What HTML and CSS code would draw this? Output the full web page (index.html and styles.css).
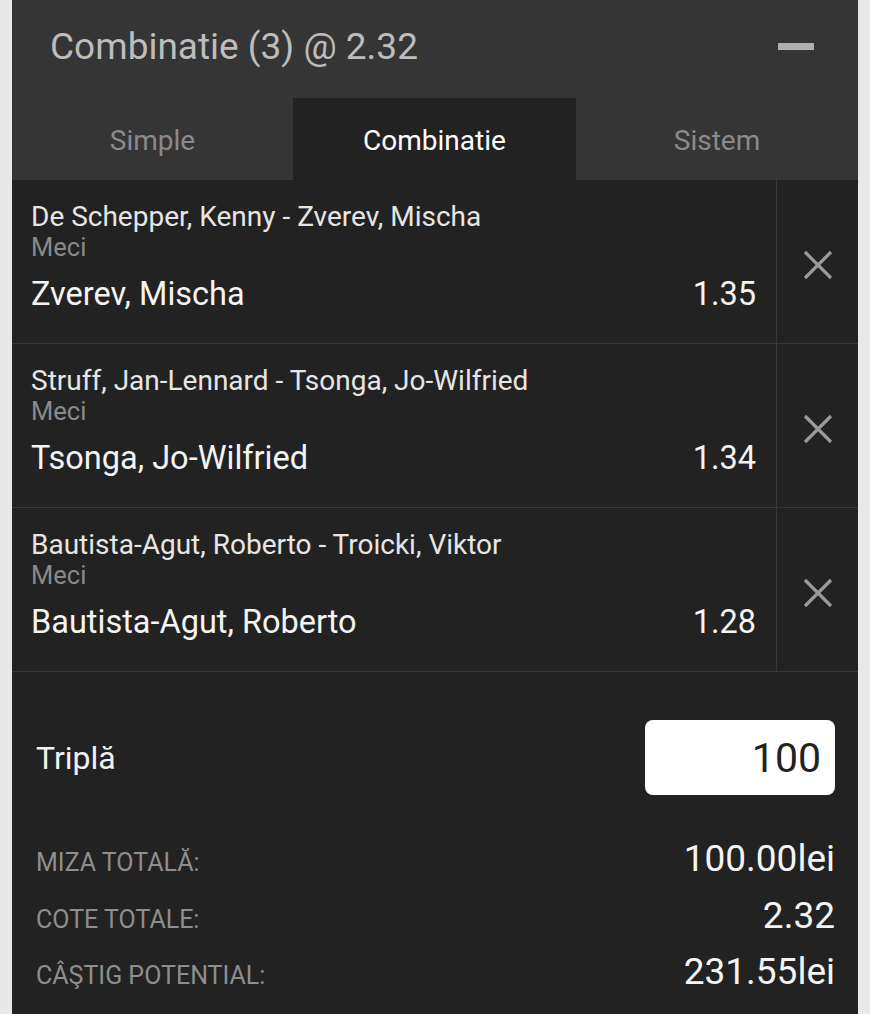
FILE: index.html
```html
<!DOCTYPE html>
<html>
<head>
<meta charset="utf-8">
<link rel="stylesheet" href="styles.css">
</head>
<body>
<div class="panel">
  <div class="head">
    <div class="title">Combinatie (3) @ 2.32</div>
    <div class="minus"></div>
  </div>
  <div class="tabs">
    <div class="tab">Simple</div>
    <div class="tab active">Combinatie</div>
    <div class="tab">Sistem</div>
  </div>
  <div class="bets">
    <div class="bet">
      <div class="info">
        <div class="match">De Schepper, Kenny - Zverev, Mischa</div>
        <div class="market">Meci</div>
        <div class="pick"><span>Zverev, Mischa</span><span>1.35</span></div>
      </div>
      <div class="remove"><svg width="32" height="32" viewBox="0 0 32 32"><path d="M3 3L29 29M29 3L3 29" stroke="#9a9a9a" stroke-width="3.2" fill="none"/></svg></div>
    </div>
    <div class="bet">
      <div class="info">
        <div class="match">Struff, Jan-Lennard - Tsonga, Jo-Wilfried</div>
        <div class="market">Meci</div>
        <div class="pick"><span>Tsonga, Jo-Wilfried</span><span>1.34</span></div>
      </div>
      <div class="remove"><svg width="32" height="32" viewBox="0 0 32 32"><path d="M3 3L29 29M29 3L3 29" stroke="#9a9a9a" stroke-width="3.2" fill="none"/></svg></div>
    </div>
    <div class="bet">
      <div class="info">
        <div class="match">Bautista-Agut, Roberto - Troicki, Viktor</div>
        <div class="market">Meci</div>
        <div class="pick"><span>Bautista-Agut, Roberto</span><span>1.28</span></div>
      </div>
      <div class="remove"><svg width="32" height="32" viewBox="0 0 32 32"><path d="M3 3L29 29M29 3L3 29" stroke="#9a9a9a" stroke-width="3.2" fill="none"/></svg></div>
    </div>
  </div>
  <div class="stake">
    <div class="stake-label">Triplă</div>
    <div class="stake-input">100</div>
  </div>
  <div class="totals">
    <div class="trow"><span class="tl">MIZA TOTALĂ:</span><span class="tv">100.00lei</span></div>
    <div class="trow"><span class="tl">COTE TOTALE:</span><span class="tv">2.32</span></div>
    <div class="trow"><span class="tl">CÂŞTIG POTENTIAL:</span><span class="tv">231.55lei</span></div>
  </div>
</div>
</body>
</html>
```
FILE: styles.css
```css
html, body {
  margin: 0;
  padding: 0;
  background: #e8e8e8;
  height: 100%;
}
body {
  font-family: Roboto, "Liberation Sans", sans-serif;
}
.panel {
  margin: 0 12px;
  background: #222222;
  min-height: 1014px;
}
.head {
  height: 98px;
  background: #353535;
  display: flex;
  align-items: center;
  justify-content: space-between;
  padding: 0 44px 6px 38px;
  box-sizing: border-box;
}
.title {
  color: #bdbdbd;
  font-size: 37px;
}
.minus {
  width: 36px;
  height: 7px;
  background: #b0b0b0;
}
.tabs {
  display: grid;
  grid-template-columns: 281px 283px 1fr;
  height: 82px;
  background: #353535;
}
.tab {
  display: flex;
  align-items: center;
  justify-content: center;
  color: #8a8a8a;
  font-size: 28px;
  padding-top: 2px;
}
.tab.active {
  background: #222222;
  color: #ffffff;
}
.bet {
  display: grid;
  grid-template-columns: 1fr 82px;
  height: 164px;
  border-bottom: 1px solid #383838;
  box-sizing: border-box;
}
.info {
  padding: 21px 20px 0 19px;
}
.match {
  color: #e6e6e6;
  font-size: 28px;
  line-height: 32px;
}
.market {
  color: #8a8a8a;
  font-size: 25.5px;
  line-height: 28px;
}
.pick {
  display: flex;
  justify-content: space-between;
  color: #f4f4f4;
  font-size: 32.5px;
  line-height: 40px;
  margin-top: 13px;
}
.remove {
  border-left: 1px solid #383838;
  display: flex;
  align-items: center;
  justify-content: center;
  padding-top: 6px;
}
.stake {
  display: flex;
  align-items: center;
  justify-content: space-between;
  padding: 48px 23px 0 24px;
}
.stake-label {
  color: #f2f2f2;
  font-size: 32px;
}
.stake-input {
  width: 190px;
  height: 75px;
  box-sizing: border-box;
  background: #ffffff;
  border-radius: 8px;
  color: #222;
  font-size: 41px;
  display: flex;
  align-items: center;
  justify-content: flex-end;
  padding-right: 14px;
}
.totals {
  padding: 42px 23px 0 24px;
}
.trow {
  display: flex;
  justify-content: space-between;
  align-items: baseline;
  height: 56.5px;
}
.tl {
  color: #8e8e8e;
  font-size: 25px;
}
.tv {
  color: #f4f4f4;
  font-size: 37px;
}
```
